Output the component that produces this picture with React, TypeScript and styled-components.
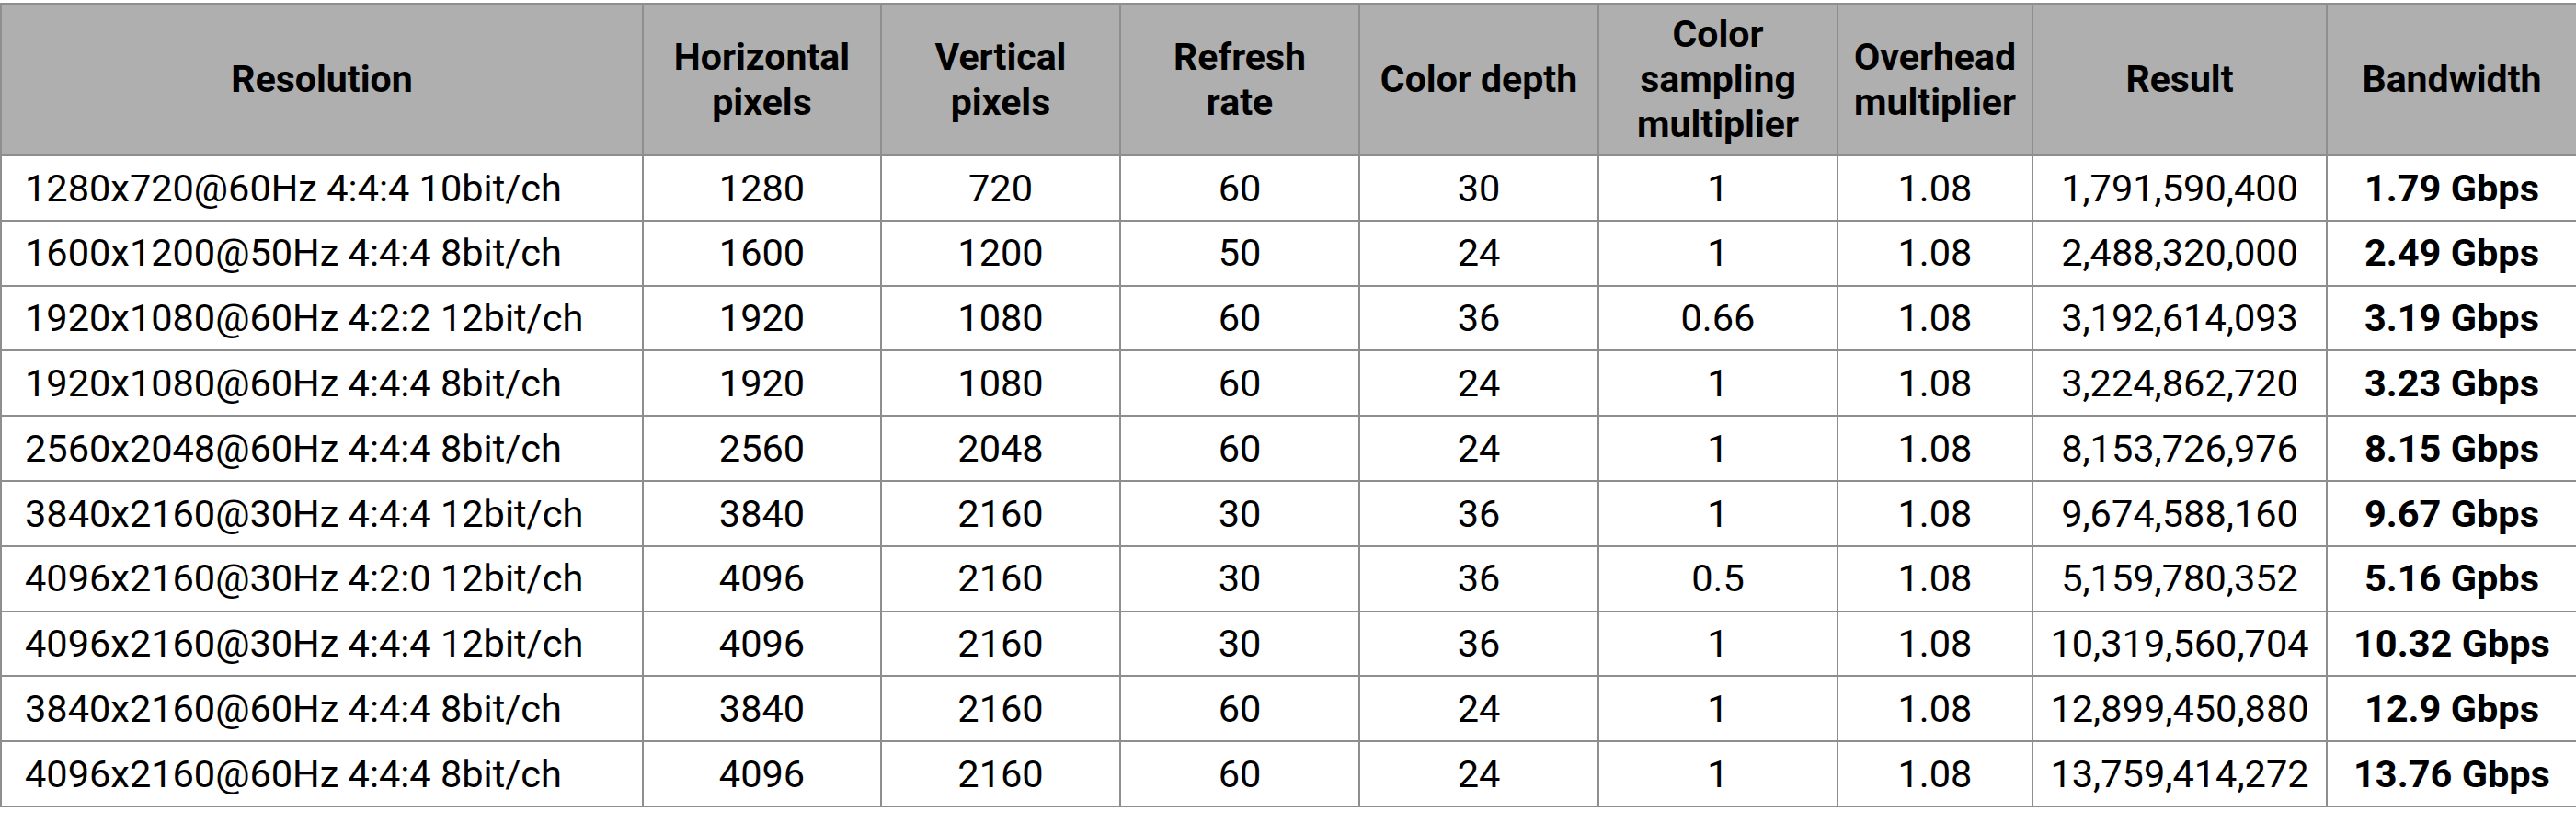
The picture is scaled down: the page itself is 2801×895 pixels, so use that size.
import styled, { createGlobalStyle } from 'styled-components';

const GlobalStyle = createGlobalStyle`
  html, body {
    margin: 0;
    padding: 0;
    background: #fff;
  }
  body {
    font-family: Roboto, 'Liberation Sans', sans-serif;
    color: #000;
  }
`;

const Page = styled.div`
  padding-top: 3px;
`;

const Table = styled.table`
  width: 2801px;
  table-layout: fixed;
  border-collapse: collapse;
  border: 2px solid #8e8e8e;
`;

const HeadCell = styled.th`
  box-sizing: border-box;
  height: 165px;
  padding: 0 4px;
  background: #afafaf;
  border: 2px solid #8e8e8e;
  font-size: 41px;
  font-weight: 700;
  line-height: 49px;
  text-align: center;
  vertical-align: middle;
`;

const Cell = styled.td<{ $left?: boolean; $bold?: boolean }>`
  box-sizing: border-box;
  height: 70.8px;
  padding: 0 ${(p) => (p.$left ? '25px' : '4px')};
  border: 2px solid #8e8e8e;
  font-size: 41.5px;
  font-weight: ${(p) => (p.$bold ? 700 : 400)};
  line-height: 1;
  white-space: nowrap;
  text-align: ${(p) => (p.$left ? 'left' : 'center')};
  vertical-align: middle;
`;

const widths = [698, 259, 260, 260, 260, 260, 212, 320, 272];

const headers = [
  ['Resolution'],
  ['Horizontal', 'pixels'],
  ['Vertical', 'pixels'],
  ['Refresh', 'rate'],
  ['Color depth'],
  ['Color', 'sampling', 'multiplier'],
  ['Overhead', 'multiplier'],
  ['Result'],
  ['Bandwidth'],
];

const rows = [
  ['1280x720@60Hz 4:4:4 10bit/ch', '1280', '720', '60', '30', '1', '1.08', '1,791,590,400', '1.79 Gbps'],
  ['1600x1200@50Hz 4:4:4 8bit/ch', '1600', '1200', '50', '24', '1', '1.08', '2,488,320,000', '2.49 Gbps'],
  ['1920x1080@60Hz 4:2:2 12bit/ch', '1920', '1080', '60', '36', '0.66', '1.08', '3,192,614,093', '3.19 Gbps'],
  ['1920x1080@60Hz 4:4:4 8bit/ch', '1920', '1080', '60', '24', '1', '1.08', '3,224,862,720', '3.23 Gbps'],
  ['2560x2048@60Hz 4:4:4 8bit/ch', '2560', '2048', '60', '24', '1', '1.08', '8,153,726,976', '8.15 Gbps'],
  ['3840x2160@30Hz 4:4:4 12bit/ch', '3840', '2160', '30', '36', '1', '1.08', '9,674,588,160', '9.67 Gbps'],
  ['4096x2160@30Hz 4:2:0 12bit/ch', '4096', '2160', '30', '36', '0.5', '1.08', '5,159,780,352', '5.16 Gpbs'],
  ['4096x2160@30Hz 4:4:4 12bit/ch', '4096', '2160', '30', '36', '1', '1.08', '10,319,560,704', '10.32 Gbps'],
  ['3840x2160@60Hz 4:4:4 8bit/ch', '3840', '2160', '60', '24', '1', '1.08', '12,899,450,880', '12.9 Gbps'],
  ['4096x2160@60Hz 4:4:4 8bit/ch', '4096', '2160', '60', '24', '1', '1.08', '13,759,414,272', '13.76 Gbps'],
];

const App = () => {
  return (
    <Page>
      <GlobalStyle />
      <Table>
        <colgroup>
          {widths.map((w, i) => (
            <col key={i} style={{ width: w }} />
          ))}
        </colgroup>
        <thead>
          <tr>
            {headers.map((lines, i) => (
              <HeadCell key={i}>
                {lines.map((l, j) => (
                  <div key={j}>{l}</div>
                ))}
              </HeadCell>
            ))}
          </tr>
        </thead>
        <tbody>
          {rows.map((row, r) => (
            <tr key={r}>
              {row.map((val, c) => (
                <Cell key={c} $left={c === 0} $bold={c === row.length - 1}>
                  {val}
                </Cell>
              ))}
            </tr>
          ))}
        </tbody>
      </Table>
    </Page>
  );
};

export default App;
